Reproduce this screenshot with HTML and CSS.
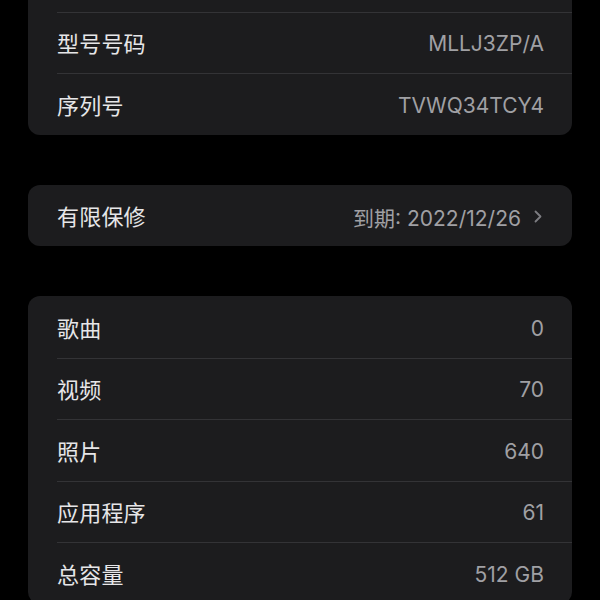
FILE: index.html
```html
<!DOCTYPE html>
<html lang="zh-CN">
<head>
<meta charset="utf-8">
<title>关于本机</title>
<link rel="stylesheet" href="styles.css">
</head>
<body>
<main class="page">
  <section class="card">
    <div class="row"><span class="label">型号名称</span><span class="value">iPhone 13 Pro Max</span></div>
    <div class="row"><span class="label">型号号码</span><span class="value">MLLJ3ZP/A</span></div>
    <div class="row"><span class="label">序列号</span><span class="value">TVWQ34TCY4</span></div>
  </section>
  <section class="card">
    <div class="row"><span class="label">有限保修</span><span class="value">到期: 2022/12/26<svg class="chev" width="8" height="13" viewBox="0 0 8 13"><path d="M1.5 1.5 L6.5 6.5 L1.5 11.5" fill="none" stroke="#7d7d82" stroke-width="1.8" stroke-linecap="round" stroke-linejoin="round"/></svg></span></div>
  </section>
  <section class="card">
    <div class="row"><span class="label">歌曲</span><span class="value">0</span></div>
    <div class="row"><span class="label">视频</span><span class="value">70</span></div>
    <div class="row"><span class="label">照片</span><span class="value">640</span></div>
    <div class="row"><span class="label">应用程序</span><span class="value">61</span></div>
    <div class="row"><span class="label">总容量</span><span class="value">512 GB</span></div>
  </section>
</main>
</body>
</html>
```
FILE: styles.css
```css
html, body {
  margin: 0;
  padding: 0;
  background: #000;
  height: 600px;
  overflow: hidden;
}
.page {
  margin-top: -50px;
  padding: 0 28px 0 28px;
  display: flex;
  flex-direction: column;
  gap: 50px;
  font-family: "Inter", "Noto Sans CJK SC", sans-serif;
}
.card {
  background: #1c1c1e;
  border-radius: 12px;
  overflow: hidden;
}
.row {
  height: 61.5px;
  display: flex;
  align-items: center;
  justify-content: space-between;
  padding: 0 28px 0 29px;
  position: relative;
}
.row + .row::before {
  content: "";
  position: absolute;
  left: 29px;
  right: 0;
  top: 0;
  height: 1px;
  background: #333336;
}
.label {
  font-family: "Noto Sans CJK SC", sans-serif;
  font-size: 22px;
  color: #e6e6e8;
  letter-spacing: 0.2px;
}
.value {
  font-size: 21px;
  color: #a0a0a4;
  display: flex;
  align-items: center;
  gap: 13px;
  padding-top: 3px;
}
.chev {
  margin-right: 2px;
}
```
